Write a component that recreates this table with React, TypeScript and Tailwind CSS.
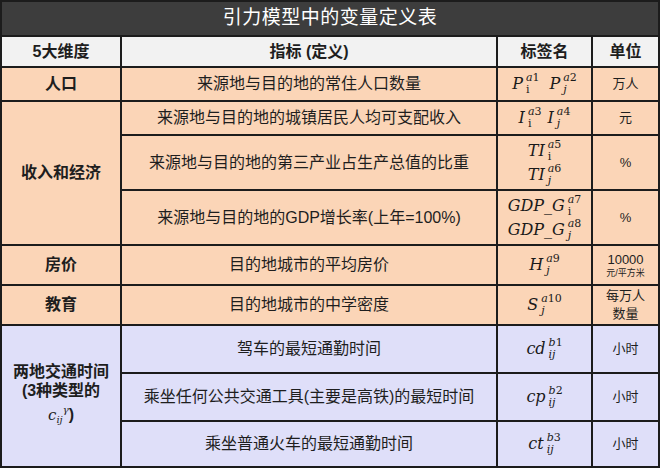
import React from "react";

const CJK = "font-['Liberation_Sans','Noto_Sans_CJK_SC','Noto_Sans',sans-serif]";
const SERIF = "font-['DejaVu_Serif','Liberation_Serif',serif]";

function Sym({ base, sup, sub }: { base: string; sup: React.ReactNode; sub: React.ReactNode }) {
  return (
    <span className={`inline-flex items-center ${SERIF} text-[#1a1a1a]`}>
      <span className="italic text-[16px] leading-none">{base}</span>
      <span className="inline-flex flex-col items-start ml-[3px] text-[11px] leading-[12px]">
        <span>{sup}</span>
        <span>{sub}</span>
      </span>
    </span>
  );
}

const A = ({ n }: { n: string }) => (
  <>
    <i>a</i>
    {n}
  </>
);
const B = ({ n }: { n: string }) => (
  <>
    <i>b</i>
    {n}
  </>
);
const I = () => <span>i</span>;
const J = () => <i>j</i>;
const IJ = () => <i>ij</i>;

const td = "border-2 border-[#1c1c1c] text-center align-middle p-0";
const peach = "bg-[#fbd5b7]";
const lav = "bg-[#dfdff9]";

export default function App() {
  return (
    <div className={`w-[660px] h-[471px] bg-white ${CJK}`}>
      <table className="border-collapse table-fixed w-[658px] text-[#1e1e1e]">
        <colgroup>
          <col className="w-[120px]" />
          <col className="w-[376px]" />
          <col className="w-[95px]" />
          <col className="w-[67px]" />
        </colgroup>
        <tbody>
          <tr className="h-[35px]">
            <td colSpan={4} className={`${td} bg-[#3d3d3d] text-white text-[19px] tracking-[0.5px]`}>
              引力模型中的变量定义表
            </td>
          </tr>
          <tr className="h-[31px] bg-[#f2f2f2] font-bold text-[16px]">
            <td className={td}>5大维度</td>
            <td className={td}>指标 (定义)</td>
            <td className={td}>标签名</td>
            <td className={td}>单位</td>
          </tr>
          <tr className={`h-[34px] ${peach}`}>
            <td className={`${td} font-bold text-[16px]`}>人口</td>
            <td className={`${td} text-[16px]`}>来源地与目的地的常住人口数量</td>
            <td className={td}>
              <span className="inline-flex gap-[10px]">
                <Sym base="P" sup={<A n="1" />} sub={<I />} />
                <Sym base="P" sup={<A n="2" />} sub={<J />} />
              </span>
            </td>
            <td className={`${td} text-[13px]`}>万人</td>
          </tr>
          <tr className={`h-[34px] ${peach}`}>
            <td rowSpan={3} className={`${td} font-bold text-[16px]`}>
              收入和经济
            </td>
            <td className={`${td} text-[16px]`}>来源地与目的地的城镇居民人均可支配收入</td>
            <td className={td}>
              <span className="inline-flex gap-[6px]">
                <Sym base="I" sup={<A n="3" />} sub={<I />} />
                <Sym base="I" sup={<A n="4" />} sub={<J />} />
              </span>
            </td>
            <td className={`${td} text-[13px]`}>元</td>
          </tr>
          <tr className={`h-[55px] ${peach}`}>
            <td className={`${td} text-[16px]`}>来源地与目的地的第三产业占生产总值的比重</td>
            <td className={td}>
              <span className="inline-flex flex-col items-center">
                <Sym base="TI" sup={<A n="5" />} sub={<I />} />
                <Sym base="TI" sup={<A n="6" />} sub={<J />} />
              </span>
            </td>
            <td className={`${td} text-[13px]`}>%</td>
          </tr>
          <tr className={`h-[55px] ${peach}`}>
            <td className={`${td} text-[16px]`}>来源地与目的地的GDP增长率(上年=100%)</td>
            <td className={td}>
              <span className="inline-flex flex-col items-center">
                <Sym base="GDP_G" sup={<A n="7" />} sub={<I />} />
                <Sym base="GDP_G" sup={<A n="8" />} sub={<J />} />
              </span>
            </td>
            <td className={`${td} text-[13px]`}>%</td>
          </tr>
          <tr className={`h-[40px] ${peach}`}>
            <td className={`${td} font-bold text-[16px]`}>房价</td>
            <td className={`${td} text-[16px]`}>目的地城市的平均房价</td>
            <td className={td}>
              <Sym base="H" sup={<A n="9" />} sub={<J />} />
            </td>
            <td className={td}>
              <div className="flex flex-col items-center">
                <span className="text-[13px] leading-[15px]">10000</span>
                <span className="text-[9px] leading-[12px]">元/平方米</span>
              </div>
            </td>
          </tr>
          <tr className={`h-[40px] ${peach}`}>
            <td className={`${td} font-bold text-[16px]`}>教育</td>
            <td className={`${td} text-[16px]`}>目的地城市的中学密度</td>
            <td className={td}>
              <Sym base="S" sup={<A n="10" />} sub={<J />} />
            </td>
            <td className={td}>
              <div className="flex flex-col items-center text-[13px] leading-[18px]">
                <span>每万人</span>
                <span>数量</span>
              </div>
            </td>
          </tr>
          <tr className={`h-[48px] ${lav}`}>
            <td rowSpan={3} className={`${td} font-bold text-[16px]`}>
              <div className="flex flex-col items-center leading-[19px]">
                <span>两地交通时间</span>
                <span>(3种类型的</span>
                <span className="leading-[20px]">
                  <span className={`${SERIF} font-normal italic text-[15px]`}>c</span>
                  <span className={`${SERIF} font-normal italic text-[10px] align-[-3px]`}>ij</span>
                  <span className={`${SERIF} font-normal italic text-[10px] align-[7px]`}>γ</span>
                  <span>)</span>
                </span>
              </div>
            </td>
            <td className={`${td} text-[16px]`}>驾车的最短通勤时间</td>
            <td className={td}>
              <Sym base="cd" sup={<B n="1" />} sub={<IJ />} />
            </td>
            <td className={`${td} text-[13px]`}>小时</td>
          </tr>
          <tr className={`h-[48px] ${lav}`}>
            <td className={`${td} text-[16px]`}>乘坐任何公共交通工具(主要是高铁)的最短时间</td>
            <td className={td}>
              <Sym base="cp" sup={<B n="2" />} sub={<IJ />} />
            </td>
            <td className={`${td} text-[13px]`}>小时</td>
          </tr>
          <tr className={`h-[46px] ${lav}`}>
            <td className={`${td} text-[16px]`}>乘坐普通火车的最短通勤时间</td>
            <td className={td}>
              <Sym base="ct" sup={<B n="3" />} sub={<IJ />} />
            </td>
            <td className={`${td} text-[13px]`}>小时</td>
          </tr>
        </tbody>
      </table>
    </div>
  );
}
